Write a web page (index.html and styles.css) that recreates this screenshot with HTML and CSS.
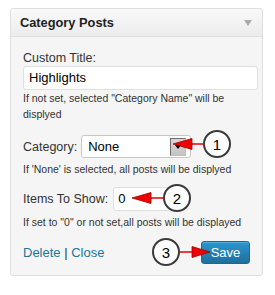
FILE: index.html
```html
<!DOCTYPE html>
<html>
<head>
<meta charset="utf-8">
<link rel="stylesheet" href="styles.css">
</head>
<body>
<div class="widget">
  <div class="widget-top">
    <span class="widget-title">Category Posts</span>
    <span class="widget-toggle"></span>
  </div>
  <div class="widget-inside">
    <div class="label first">Custom Title:</div>
    <div class="text-input">Highlights</div>
    <p class="help">If not set, selected "Category Name" will be displyed</p>

    <div class="row cat-row">
      <span class="label">Category:</span>
      <div class="select">
        <span class="select-value">None</span>
        <span class="select-btn"><span class="select-arrow"></span></span>
      </div>
    </div>
    <p class="help tight">If 'None' is selected, all posts will be displyed</p>

    <div class="row items-row">
      <span class="label">Items To Show:</span>
      <div class="num-input">0</div>
    </div>
    <p class="help tight">If set to "0" or not set,all posts will be displayed</p>

    <div class="actions">
      <div class="links"><a class="link">Delete</a> | <a class="link">Close</a></div>
      <span class="save">Save</span>
    </div>
  </div>
</div>

<div class="callout c1">
  <svg class="arrow" width="31" height="14" viewBox="0 0 31 14"><line x1="18" y1="7" x2="31" y2="7" stroke="#e00000" stroke-width="1.5"/><polygon points="1,7 20,1.5 20,12.5" fill="#ee0000" stroke="#a00000" stroke-width="0.8"/></svg>
  <span class="circle">1</span>
</div>
<div class="callout c2">
  <svg class="arrow" width="32" height="14" viewBox="0 0 32 14"><line x1="18" y1="7" x2="32" y2="7" stroke="#e00000" stroke-width="1.5"/><polygon points="1,7 20,1.5 20,12.5" fill="#ee0000" stroke="#a00000" stroke-width="0.8"/></svg>
  <span class="circle">2</span>
</div>
<div class="callout c3">
  <span class="circle">3</span>
  <svg class="arrow" width="31" height="14" viewBox="0 0 31 14"><line x1="0" y1="7" x2="14" y2="7" stroke="#e00000" stroke-width="1.5"/><polygon points="30,7 12,1.5 12,12.5" fill="#ee0000" stroke="#a00000" stroke-width="0.8"/></svg>
</div>
</body>
</html>
```
FILE: styles.css
```css
html, body {
  margin: 0;
  padding: 0;
  background: #ffffff;
}
body {
  position: relative;
  width: 275px;
  height: 295px;
  overflow: hidden;
  font-family: "Liberation Sans", Arial, sans-serif;
  color: #333333;
}
.widget {
  margin: 8px 0 0 10px;
  width: 251px;
  border: 1px solid #dfdfdf;
  border-radius: 3px;
  background: #f5f5f5;
}
.widget-top {
  height: 27px;
  border-bottom: 1px solid #dfdfdf;
  background: linear-gradient(#f9f9f9, #ececec);
  border-radius: 3px 3px 0 0;
  display: flex;
  align-items: center;
  justify-content: space-between;
  padding: 0 10px 0 9px;
}
.widget-title {
  font-weight: bold;
  font-size: 12.8px;
  color: #222222;
}
.widget-toggle {
  width: 0;
  height: 0;
  border-left: 4px solid transparent;
  border-right: 4px solid transparent;
  border-top: 6px solid #aaaaaa;
  margin-top: 1px;
}
.widget-inside {
  padding: 13px 4px 11px 12px;
}
.label {
  font-size: 12.5px;
  line-height: 16px;
  color: #333333;
}
.text-input {
  box-sizing: border-box;
  height: 24px;
  width: 235px;
  border: 1px solid #dfdfdf;
  border-radius: 3px;
  background: #ffffff;
  font-size: 13px;
  line-height: 22px;
  padding-left: 5px;
  color: #000000;
}
.help {
  margin: 0;
  font-size: 10.5px;
  line-height: 16px;
  color: #333333;
}
.help.tight {
  margin-top: 3px;
}
.row {
  display: flex;
  align-items: center;
}
.cat-row {
  margin-top: 13px;
  gap: 4px;
}
.select {
  box-sizing: border-box;
  width: 110px;
  height: 23px;
  border: 1px solid #c8c8c8;
  border-radius: 3px;
  background: #ffffff;
  display: flex;
  align-items: center;
  justify-content: space-between;
  padding: 0 4px 0 6px;
}
.select-value {
  font-size: 13px;
  color: #000000;
}
.select-btn {
  box-sizing: border-box;
  width: 16px;
  height: 18px;
  border: 1px solid #6d6d6d;
  border-right-color: #c0c0c0;
  border-bottom-color: #c0c0c0;
  background: linear-gradient(#d6d6d6, #c4c4c4);
  display: flex;
  align-items: center;
  justify-content: center;
}
.select-arrow {
  width: 0;
  height: 0;
  border-left: 3px solid transparent;
  border-right: 3px solid transparent;
  border-top: 4px solid #000000;
}
.items-row {
  margin-top: 10px;
  gap: 5px;
}
.num-input {
  box-sizing: border-box;
  width: 58px;
  height: 24px;
  border: 1px solid #dfdfdf;
  border-radius: 3px;
  background: #ffffff;
  font-size: 13px;
  line-height: 22px;
  padding-left: 4px;
  color: #000000;
}
.actions {
  margin-top: 11px;
  display: flex;
  align-items: center;
  justify-content: space-between;
  padding-right: 8px;
}
.links {
  font-size: 13px;
  color: #333333;
}
.link {
  color: #21759b;
  text-decoration: none;
}
.save {
  box-sizing: border-box;
  width: 49px;
  height: 23px;
  border: 1px solid #1b6a92;
  border-radius: 3px;
  background: linear-gradient(#2e95cb, #1f6f9e);
  color: #ffffff;
  font-size: 13px;
  line-height: 21px;
  text-align: center;
  box-shadow: inset 0 1px 0 rgba(120, 200, 240, 0.5);
}
.callout {
  position: absolute;
  display: flex;
  align-items: center;
}
.arrow {
  display: block;
}
.circle {
  box-sizing: border-box;
  width: 28px;
  height: 28px;
  border: 2px solid #3a3a3a;
  border-radius: 50%;
  background: #ffffff;
  display: flex;
  align-items: center;
  justify-content: center;
  font-size: 15px;
  color: #000000;
}
.c1 {
  left: 172px;
  top: 130px;
}
.c2 {
  left: 131px;
  top: 184px;
}
.c3 {
  left: 152px;
  top: 238px;
}
```
